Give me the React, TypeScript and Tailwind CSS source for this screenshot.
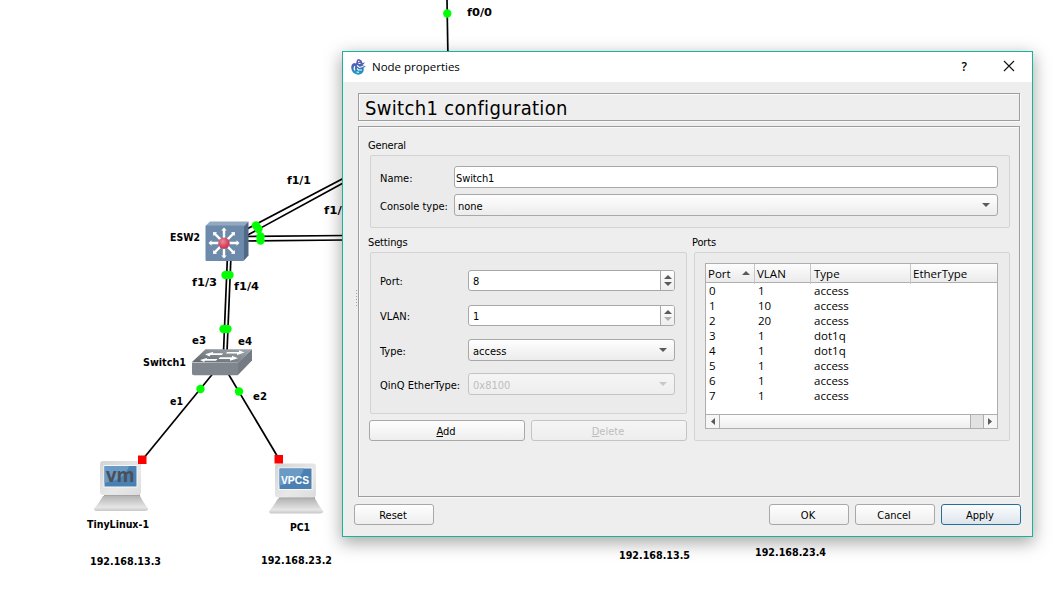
import type { ReactNode } from "react";

const ui = "font-['DejaVu_Sans_Condensed','DejaVu_Sans',sans-serif] [font-stretch:condensed]";
const segoe = "font-['Open_Sans','Noto_Sans',sans-serif] [font-stretch:normal]";

type Label = { t: string; x: number; y: number; w: number };

const labels: Label[] = [
  { t: "f0/0", x: 467, y: 16, w: 25 },
  { t: "f1/1", x: 287, y: 184, w: 24 },
  { t: "f1/2", x: 324, y: 214, w: 26 },
  { t: "ESW2", x: 170, y: 241, w: 30 },
  { t: "f1/3", x: 192, y: 286, w: 25 },
  { t: "f1/4", x: 234, y: 290, w: 25 },
  { t: "e3", x: 192, y: 344, w: 14 },
  { t: "e4", x: 238, y: 345, w: 14 },
  { t: "Switch1", x: 143, y: 366, w: 43 },
  { t: "e1", x: 170, y: 405, w: 13 },
  { t: "e2", x: 253, y: 400, w: 14 },
  { t: "TinyLinux-1", x: 87, y: 528, w: 62 },
  { t: "PC1", x: 290, y: 531, w: 20 },
  { t: "192.168.13.3", x: 90, y: 565, w: 71 },
  { t: "192.168.23.2", x: 261, y: 564, w: 71 },
  { t: "192.168.13.5", x: 619, y: 559, w: 71 },
  { t: "192.168.23.4", x: 755, y: 556, w: 71 },
];

const links = [
  [447, 0, 448, 60],
  [245, 230, 345, 177.5],
  [245, 236.5, 345, 182],
  [245, 236.5, 345, 235.5],
  [245, 241, 345, 240],
  [227.5, 255, 223.5, 352],
  [231, 255, 227, 352],
  [215, 371, 143, 459],
  [226, 370, 279, 459],
];

const ports = [
  [447.3, 13.5], [256, 225.5], [258.500, 229], [260.5, 236.5], [260.5, 240.5],
  [225.5, 275], [229.5, 275], [223.5, 329], [227.5, 329], [200.5, 389], [239, 391.5],
];

function Computer({ x, y, children }: { x: number; y: number; children: ReactNode }) {
  return (
    <g transform={`translate(${x} ${y})`}>
      <path d="M10 35H46V38H10Z" fill="#a5a5a5" />
      <path d="M9 37H46Q49 43 54 49.500Q54.500 52 51 52H3Q-.5 52 .2 49.500Q5 44 9 37Z" fill="url(#base)" />
      <rect x="6" y="2" width="41" height="34" rx="3" fill="url(#shell)" />
      <rect x="9.500" y="6" width="34" height="22.500" fill="#f7f7f7" />
      <rect x="10.500" y="7" width="32" height="20.500" fill="#4a80b2" />
      <path d="M10.500 7H35Q31 21 10.500 24Z" fill="#6a9ac6" />
      {children}
    </g>
  );
}

function Topology() {
  return (
    <svg className="absolute inset-0" width="1055" height="599" viewBox="0 0 1055 599">
      <defs>
        <linearGradient id="base" x1="0" y1="0" x2="0" y2="1">
          <stop offset="0" stopColor="#b4b4b4" />
          <stop offset=".75" stopColor="#e6e6e6" />
          <stop offset="1" stopColor="#c8c8c8" />
        </linearGradient>
        <linearGradient id="shell" x1="0" y1="0" x2="1" y2="1">
          <stop offset="0" stopColor="#d4d4d4" />
          <stop offset=".6" stopColor="#e8e8e8" />
          <stop offset="1" stopColor="#dcdcdc" />
        </linearGradient>
        <linearGradient id="slab" x1="0" y1="1" x2="1" y2="0">
          <stop offset="0" stopColor="#5f666d" />
          <stop offset="1" stopColor="#a2a8ae" />
        </linearGradient>
        <radialGradient id="core" cx=".4" cy=".35">
          <stop offset="0" stopColor="#f08a9a" />
          <stop offset="1" stopColor="#cf3e58" />
        </radialGradient>
      </defs>
      {links.map(([x1, y1, x2, y2], i) => (
        <line key={i} x1={x1} y1={y1} x2={x2} y2={y2} stroke="#000" strokeWidth="1.7" />
      ))}

      <g>
        <path d="M205.500 226L210 221.500H248.500L244 226Z" fill="#93a9c3" />
        <path d="M244 226L248.500 221.500V255.500L244 260.500Z" fill="#4f6885" />
        <rect x="205.500" y="225.500" width="38.500" height="35.500" rx="1" fill="#6d8aab" />
        {[0, 45, 90, 135, 180, 225, 270, 315].map((a) => (
          <path
            key={a}
            transform={`translate(224 243) rotate(${a})`}
            d="M-1.200 -4V-12.500H-2.700L0 -15.500L2.700 -12.500H1.200V-4Z"
            fill="#fff"
          />
        ))}
        <circle cx="224" cy="243.300" r="5.700" fill="url(#core)" />
      </g>

      <g>
        <path d="M192 362L205.500 349.300H252L238 362.500Z" fill="url(#slab)" />
        <path d="M238 362.500L252 349.300V360.500L238 375Z" fill="#747b82" />
        <path d="M192 362.500H238V375.300H194Q192 375.300 192 373.500Z" fill="#80868d" />
        <g fill="#fff">
          <path d="M227 351.900H239V350.300L244.500 352.500L237 355V353.500H226Z" />
          <path d="M223 353.200H212.500L213.500 351.700L205 354.200L209.500 356.400L210.500 355H222Z" />
          <path d="M220 357.200H232V355.700L238 358.200L230 360.700V358.900H218.500Z" />
          <path d="M217.500 359.100H206.500L207.500 357.700L200 360L204 362L205 360.800H216Z" />
        </g>
      </g>

      <Computer x={94} y={459}>
        <text x="12" y="22.500" textLength="28.500" lengthAdjust="spacingAndGlyphs" fontSize="20" fontWeight="700" fontFamily="'Open Sans',sans-serif" fill="#4b5056">
          vm
        </text>
      </Computer>
      <Computer x={269} y={461.500}>
        <text x="12" y="22" textLength="28" lengthAdjust="spacingAndGlyphs" fontSize="10" fontWeight="700" fontFamily="'Liberation Sans',sans-serif" fill="#fff">
          VPCS
        </text>
      </Computer>

      {ports.map(([x, y], i) => (
        <circle key={i} cx={x} cy={y} r="4.200" fill="#0f0" />
      ))}
      <rect x="138" y="455.500" width="8.500" height="8.500" fill="#f00" />
      <rect x="274.500" y="455" width="8.500" height="8.500" fill="#f00" />

      {labels.map((l) => (
        <text
          key={l.t}
          x={l.x}
          y={l.y}
          textLength={l.w}
          lengthAdjust="spacingAndGlyphs"
          fontSize="11"
          fontWeight="700"
          className={ui}
        >
          {l.t}
        </text>
      ))}
    </svg>
  );
}

function Tri({ d, c = "#5a5a5a", w = 8, h = 5 }: { d: "up" | "down" | "left" | "right"; c?: string; w?: number; h?: number }) {
  const p = { up: "M0 5H8L4 0Z", down: "M0 0H8L4 5Z", left: "M8 0V5L0 2.500Z", right: "M0 0V5L8 2.500Z" }[d];
  return (
    <svg width={w} height={h} viewBox="0 0 8 5" preserveAspectRatio="none" className="block shrink-0">
      <path d={p} fill={c} />
    </svg>
  );
}

function Combo({ value, disabled, className }: { value: string; disabled?: boolean; className: string }) {
  return (
    <div
      className={`flex h-[22px] items-center justify-between rounded-[3px] border pr-[7px] ${
        disabled
          ? "border-[#c4c4c4] bg-linear-to-b from-[#f5f5f5] to-[#eeeeee] text-[#bebebe]"
          : "border-[#a8a8a8] bg-linear-to-b from-[#fefefe] to-[#ececec]"
      } ${className}`}
    >
      <span className="pt-[3px]">{value}</span>
      <Tri d="down" c={disabled ? "#c8c8c8" : "#5a5a5a"} h={4} />
    </div>
  );
}

function Spin({ value, min }: { value: string; min?: boolean }) {
  return (
    <div className="flex h-[21px] w-[207px] overflow-hidden rounded-[3px] border border-[#a8a8a8] bg-white">
      <span className="flex-1 pt-[4px] pl-1 leading-[14px]">{value}</span>
      <div className="flex w-[14px] flex-col items-center justify-center gap-[3px] border-l border-[#a8a8a8] bg-linear-to-b from-[#fefefe] to-[#eeeeee]">
        <Tri d="up" h={4} />
        <Tri d="down" h={4} c={min ? "#b0b0b0" : "#5a5a5a"} />
      </div>
    </div>
  );
}

function Button({ children, className = "w-20 border-[#a8a8a8] from-[#fefefe] to-[#eeeeee]" }: { children: ReactNode; className?: string }) {
  return (
    <button className={`flex h-[21px] items-center justify-center rounded-[3px] border bg-linear-to-b pt-[2px] pr-[2px] ${className}`}>
      {children}
    </button>
  );
}

const group = "rounded-[2px] border border-[#d3d3d3] bg-[#ebebeb]";
const frame = "border border-[#9d9d9d] shadow-[1px_1px_0_#fafafa,inset_1px_1px_0_#fafafa]";

const rows = [
  ["0", "1", "access"],
  ["1", "10", "access"],
  ["2", "20", "access"],
  ["3", "1", "dot1q"],
  ["4", "1", "dot1q"],
  ["5", "1", "access"],
  ["6", "1", "access"],
  ["7", "1", "access"],
];

function PortTable() {
  return (
    <div className={`flex h-[166px] w-[293px] flex-col border border-[#aeaeae] bg-white text-[11.5px] ${segoe}`}>
      <div className="grid h-[19px] shrink-0 grid-cols-[49px_56px_100px_1fr] border-b border-[#aeaeae] bg-linear-to-b from-[#fdfdfd] to-[#ebebeb] leading-[20px]">
        <div className="flex items-center justify-between border-r border-[#c6c6c6] pr-1 pl-[2px]">
          Port
          <span className="pb-[3px]">
            <Tri d="up" h={4} />
          </span>
        </div>
        <div className="border-r border-[#c6c6c6] pl-[2px]">VLAN</div>
        <div className="border-r border-[#c6c6c6] pl-[3px]">Type</div>
        <div className="pl-[2px]">EtherType</div>
      </div>
      <div className="flex-1">
        {rows.map((r) => (
          <div key={r[0]} className="grid h-[15px] grid-cols-[49px_56px_1fr] leading-[16px]">
            <span className="pl-[3px]">{r[0]}</span>
            <span className="pl-[3px]">{r[1]}</span>
            <span className="pl-[3px]">{r[2]}</span>
          </div>
        ))}
      </div>
      <div className="flex h-[14px] shrink-0 border-t border-[#aeaeae] bg-[#e2e2e2]">
        <div className="flex w-[14px] items-center justify-center border-r border-[#aeaeae] bg-[#f6f6f6]">
          <Tri d="left" w={4} h={7} />
        </div>
        <div className="w-[251px] border-r border-[#aeaeae] bg-linear-to-b from-[#fdfdfd] to-[#eeeeee]" />
        <div className="w-[12px]" />
        <div className="flex flex-1 items-center justify-center border-l border-[#aeaeae] bg-[#f6f6f6] pr-px">
          <Tri d="right" w={4} h={7} />
        </div>
      </div>
    </div>
  );
}

function Field({ label, className, children }: { label: string; className?: string; children: ReactNode }) {
  return (
    <div className={`flex items-center ${className ?? ""}`}>
      <span className="w-[88px] shrink-0 pt-[3px] whitespace-nowrap">{label}</span>
      {children}
    </div>
  );
}

function Dialog() {
  return (
    <div className={`absolute top-[51px] left-[342px] flex h-[486px] w-[691px] flex-col border border-[#18b39b] bg-[#eeeeee] text-[11px] leading-[14px] text-black shadow-[0_5px_16px_1px_rgba(0,0,0,0.34)] ${ui}`}>
      <header className={`flex h-[30px] shrink-0 items-center bg-white pl-[8px] text-[11.5px] ${segoe}`}>
        <svg width="15" height="16" viewBox="0 0 15 16">
          <defs>
            <linearGradient id="logo" x1="0" y1="0" x2="0" y2="1">
              <stop offset="0" stopColor="#6a55b8" />
              <stop offset=".5" stopColor="#3f6ab5" />
              <stop offset="1" stopColor="#15a5c4" />
            </linearGradient>
          </defs>
          <path d="M5 4.500L6 .8L8 0L10.500 1.500L11.500 4L14 3.500L11.500 6.200L14.800 7.500L12.500 8.700Q13.500 13 10.500 14.800Q6 17 2 13.500Q-1 9 1 5.500Q2.500 3 5 4.500Z" fill="url(#logo)" />
          <path d="M3.800 7Q2.300 9.500 4 11.500M6 6.500L8.500 8.500L12.500 7.300M6 9.500L7.500 11H11M5.500 13L8 13.300M7.500 4.500H9.500" stroke="#fff" strokeWidth="1.100" fill="none" />
          <circle cx="7.800" cy="2.500" r=".8" fill="#fff" />
        </svg>
        <span className="pl-[6px]">Node properties</span>
        <span className="mr-[36px] ml-auto pb-px text-[12px] font-semibold">?</span>
        <svg width="12" height="12" viewBox="0 0 12 12" className="mr-[17px] mb-[2px]">
          <path d="M1 1L11 11M11 1L1 11" stroke="#111" strokeWidth="1.100" />
        </svg>
      </header>

      <div className="flex flex-1 flex-col pt-[11px]">
        <h1 className={`ml-[15px] h-[28px] w-[662px] pl-[6px] text-[20px] leading-[29px] tracking-[0.32px] ${frame}`}>Switch1 configuration</h1>
        <div className="mt-[5px] flex">
          <div className="flex w-[15px] flex-col items-end justify-center gap-[2px] pr-px pb-7">
            {[0, 1, 2, 3, 4, 5].map((i) => (
              <i key={i} className="size-px bg-[#a0a0a0]" />
            ))}
          </div>
          <div className={`h-[371px] w-[662px] pt-[11px] pl-[9px] ${frame}`}>
            <div className="h-[17px] pt-px tracking-[-0.15px]">General</div>
            <div className={`ml-[2px] flex h-[73px] w-[640px] flex-col gap-[6px] pt-[10px] pl-[9px] ${group}`}>
              <Field label="Name:" className="[&>span]:w-[74px]">
                <div className="h-[22px] w-[544px] rounded-[3px] border border-[#a8a8a8] bg-white pt-[5px] pl-px tracking-[-0.1px]">Switch1</div>
              </Field>
              <Field label="Console type:" className="[&>span]:w-[74px]">
                <Combo value="none" className="w-[544px] pl-[3px]" />
              </Field>
            </div>
            <div className="flex gap-[7px]">
              <div>
                <div className="h-[24px] pt-[8px] tracking-[-0.15px]">Settings</div>
                <div className={`ml-[2px] flex h-[162px] w-[317px] flex-col pt-[17px] pl-[9px] ${group}`}>
                  <Field label="Port:"><Spin value="8" /></Field>
                  <Field label="VLAN:" className="mt-[14px]"><Spin value="1" min /></Field>
                  <Field label="Type:" className="mt-[13px]"><Combo value="access" className="w-[207px] pl-[4px]" /></Field>
                  <Field label="QinQ EtherType:" className="mt-[12px]"><Combo value="0x8100" disabled className="w-[207px] pl-[4px]" /></Field>
                </div>
                <div className="mt-[6px] ml-px flex gap-[6px]">
                  <Button className="w-[156px] border-[#a8a8a8] from-[#fefefe] to-[#eeeeee]"><span><u>A</u>dd</span></Button>
                  <Button className="w-[156px] border-[#c4c4c4] from-[#f5f5f5] to-[#eeeeee] text-[#bebebe]"><span><u>D</u>elete</span></Button>
                </div>
              </div>
              <div>
                <div className="-ml-[2px] h-[24px] pt-[8px] tracking-[-0.15px]">Ports</div>
                <div className={`h-[189px] w-[316px] pt-[10px] pl-[10px] ${group}`}>
                  <PortTable />
                </div>
              </div>
            </div>
          </div>
        </div>
        <footer className="mt-[7px] flex gap-[6px] pl-[11px]">
          <Button>Reset</Button>
          <div className="w-[323px]" />
          <Button>OK</Button>
          <Button>Cancel</Button>
          <Button className="w-20 border-[#256f9b] from-[#fcfdfe] to-[#dce5ec]">Apply</Button>
        </footer>
      </div>
    </div>
  );
}

export default function App() {
  return (
    <main className="relative h-[599px] w-[1055px] overflow-hidden bg-white">
      <Topology />
      <Dialog />
    </main>
  );
}
